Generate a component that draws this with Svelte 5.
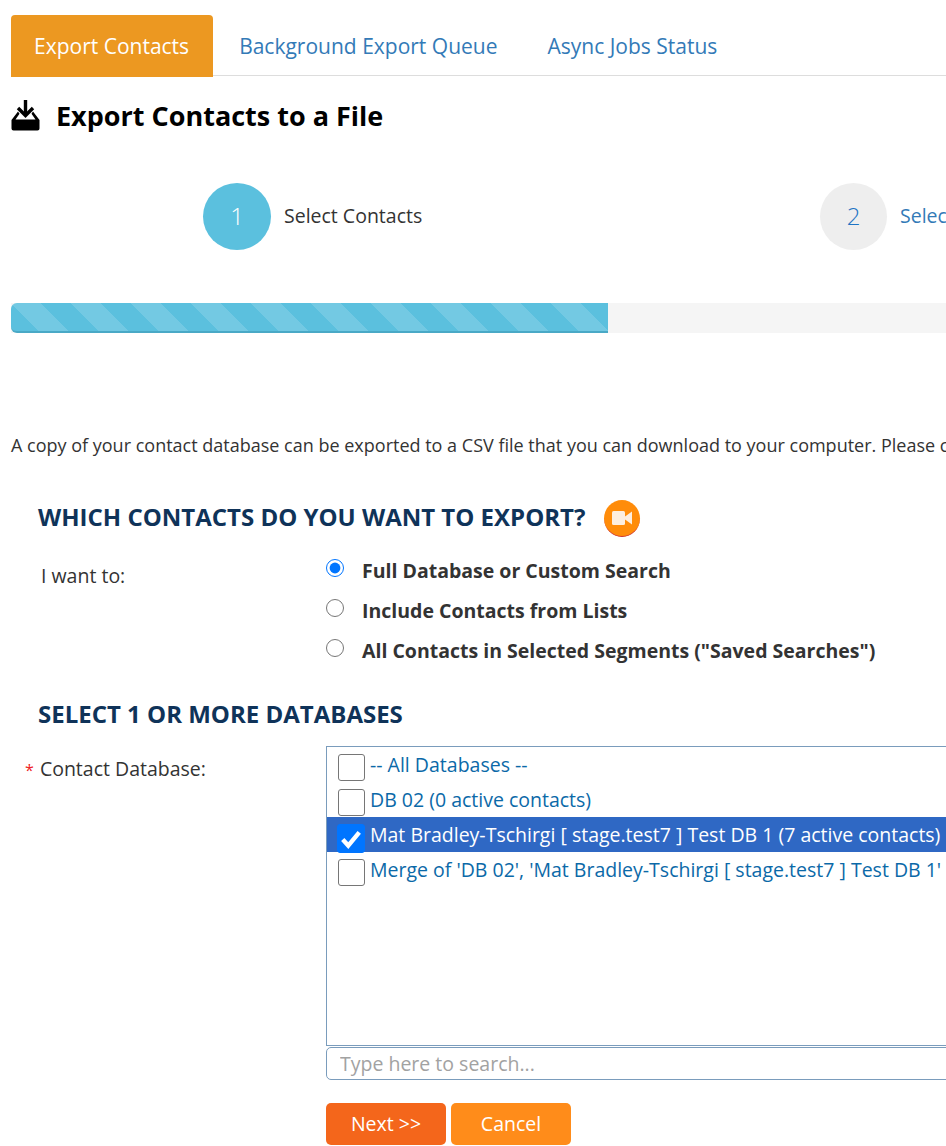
<script>
  const tabs = ['Export Contacts', 'Background Export Queue', 'Async Jobs Status'];
  const modes = [
    'Full Database or Custom Search',
    'Include Contacts from Lists',
    'All Contacts in Selected Segments ("Saved Searches")',
  ];
  const databases = [
    { label: '-- All Databases --', checked: false },
    { label: 'DB 02 (0 active contacts)', checked: false },
    { label: 'Mat Bradley-Tschirgi [ stage.test7 ] Test DB 1 (7 active contacts)', checked: true },
    { label: "Merge of 'DB 02', 'Mat Bradley-Tschirgi [ stage.test7 ] Test DB 1' (7 active contacts)", checked: false },
  ];
</script>

<div class="page">
  <nav class="tabs">
    {#each tabs as tab, i}
      <a class="tab" class:active={i === 0} href="#top">{tab}</a>
    {/each}
  </nav>

  <h1 class="title">
    <svg class="title-icon" width="29" height="31" viewBox="0 0 29 31">
      <path d="M14.5 0v14" stroke="#000" stroke-width="3.4" fill="none"/>
      <path d="M7 8l7.5 7.5L22 8" stroke="#000" stroke-width="3.4" fill="none"/>
      <path d="M7 11.5L.5 20v8.5a2 2 0 0 0 2 2h24a2 2 0 0 0 2-2V20L22 11.5l-1.5 2.2 4 5.8H4.500l4-5.800z" fill="#000"/>
    </svg>
    Export Contacts to a File
  </h1>

  <div class="steps">
    <div class="step current"><span class="circle">1</span><span class="step-label">Select Contacts</span></div>
    <div class="step"><span class="circle">2</span><span class="step-label">Select Fields</span></div>
  </div>

  <div class="progress"><div class="progress-bar"></div></div>

  <p class="intro">A copy of your contact database can be exported to a CSV file that you can download to your computer. Please choose the contacts to export below.</p>

  <h2 class="heading first">
    WHICH CONTACTS DO YOU WANT TO EXPORT?
    <span class="video">
      <svg width="20" height="14" viewBox="0 0 20 14"><rect x="0" y="0" width="13" height="14" rx="1.500" fill="#fdeee0"/><path d="M13 5.500L20 .5v13L13 8.500z" fill="#fdeee0"/></svg>
    </span>
  </h2>

  <div class="want">
    <span class="want-label">I want to:</span>
    <div class="radios">
      {#each modes as mode, i}
        <label class="radio"><input type="radio" name="mode" checked={i === 0} /><span>{mode}</span></label>
      {/each}
    </div>
  </div>

  <h2 class="heading second">SELECT 1 OR MORE DATABASES</h2>

  <div class="db">
    <span class="db-label"><i>*</i> Contact Database:</span>
    <div class="db-field">
      <div class="db-list">
        {#each databases as db}
          <div class="db-row" class:selected={db.checked}>
            <span class="check">
              {#if db.checked}
                <svg width="22" height="20" viewBox="0 0 20 18"><path d="M2.500 9.500l5 5.500L17.500 3" stroke="#fff" stroke-width="4" fill="none"/></svg>
              {/if}
            </span>
            <span class="db-text">{db.label}</span>
          </div>
        {/each}
      </div>
      <input class="search" type="text" placeholder="Type here to search..." />
      <div class="actions">
        <button class="btn next">Next &gt;&gt;</button>
        <button class="btn cancel">Cancel</button>
      </div>
    </div>
  </div>
</div>

<style>
  :global(body) {
    margin: 0;
    background: #fff;
    overflow: hidden;
  }

  .page {
    width: 946px;
    height: 1146px;
    overflow: hidden;
    box-sizing: border-box;
    padding: 15px 0 0 11px;
    font-family: "Open Sans", "Liberation Sans", sans-serif;
    font-size: 16px;
    color: #333;
  }

  .tabs {
    display: flex;
    height: 60px;
    border-bottom: 1px solid #ddd;
  }

  .tab {
    height: 62px;
    line-height: 62px;
    padding: 0 23px;
    margin-right: 4px;
    font-size: 21px;
    color: #337ab7;
    text-decoration: none;
    white-space: nowrap;
    border-radius: 4px 4px 0 0;
  }

  .tab.active {
    padding-right: 24px;
    margin-right: 3px;
    background: #ec9821;
    color: #fff;
  }

  .title {
    display: flex;
    align-items: center;
    gap: 16px;
    margin: 21px 0 0;
    height: 36px;
    font-size: 27px;
    font-weight: 700;
    color: #000;
  }

  .title-icon {
    flex: none;
  }

  .steps {
    display: flex;
    margin: 50px 0 0 192px;
    height: 67px;
  }

  .step {
    display: flex;
    align-items: center;
    gap: 13px;
    width: 617px;
    flex: none;
    font-size: 19.500px;
    color: #337ab7;
    white-space: nowrap;
  }

  .step.current {
    color: #333;
  }

  .step-label {
    padding-bottom: 2px;
  }

  .circle {
    width: 67px;
    height: 67px;
    border-radius: 50%;
    flex: none;
    display: flex;
    align-items: center;
    justify-content: center;
    padding-bottom: 2px;
    box-sizing: border-box;
    font-size: 24px;
    font-weight: 300;
    background: #eee;
    color: #1f74c4;
  }

  .current .circle {
    width: 68px;
    background: #5bc0de;
    color: #fff;
  }

  .progress {
    margin-top: 53px;
    height: 30px;
    background: #f5f5f5;
    overflow: hidden;
  }

  .progress-bar {
    width: 597px;
    height: 30px;
    box-sizing: border-box;
    border-radius: 6px 0 0 6px;
    border-bottom: 2px solid #4aa9c6;
    background-color: #5bc0de;
    background-image: linear-gradient(
      45deg,
      rgba(255, 255, 255, 0.15) 25%,
      transparent 25%,
      transparent 50%,
      rgba(255, 255, 255, 0.15) 50%,
      rgba(255, 255, 255, 0.15) 75%,
      transparent 75%
    );
    background-size: 60px 60px;
  }

  .intro {
    margin: 101px 0 0;
    line-height: 22px;
    font-size: 18px;
    white-space: nowrap;
  }

  .heading {
    display: flex;
    align-items: center;
    margin: 0 0 0 27px;
    font-size: 24px;
    font-weight: 700;
    color: #0f3359;
    white-space: nowrap;
  }

  .heading.first {
    margin-top: 41px;
    height: 38px;
  }

  .heading.second {
    margin-top: 32px;
    height: 32px;
  }

  .video {
    width: 36px;
    height: 37px;
    margin: 5px 0 0 19px;
    border-radius: 50%;
    background: #ff8c0a;
    border-bottom: 1px solid #c33;
    box-sizing: border-box;
    display: flex;
    align-items: center;
    justify-content: center;
  }

  .want {
    display: flex;
    margin-top: 22px;
  }

  .want-label {
    width: 285px;
    margin: 0 0 0 30px;
    padding-top: 5px;
    font-size: 19.500px;
    flex: none;
  }

  .radios {
    display: flex;
    flex-direction: column;
    gap: 12px;
  }

  .radio {
    display: flex;
    gap: 18px;
    height: 28px;
    line-height: 28px;
    font-size: 19.500px;
    font-weight: 700;
    white-space: nowrap;
  }

  .radio input {
    width: 18px;
    height: 18px;
    margin: 2px 0 0;
    accent-color: #0075ff;
  }

  .db {
    display: flex;
    margin-top: 17px;
  }

  .db-label {
    width: 301px;
    margin-left: 14px;
    padding-top: 9px;
    font-size: 19.500px;
    flex: none;
    box-sizing: border-box;
  }

  .db-label i {
    margin-right: 1px;
    color: #e22;
    font-size: 16px;
    font-style: normal;
  }

  .db-field {
    width: 640px;
    flex: none;
  }

  .db-list {
    height: 300px;
    box-sizing: border-box;
    border: 1px solid #7a9cbc;
    overflow: hidden;
  }

  .db-row {
    display: flex;
    height: 35px;
    line-height: 35px;
    padding-left: 11px;
    gap: 5px;
    font-size: 19.500px;
    color: #0b69a8;
    white-space: nowrap;
  }

  .db-row.selected {
    background: #2f68c4;
    color: #fff;
  }

  .check {
    width: 27px;
    height: 27px;
    margin-top: 7px;
    flex: none;
    box-sizing: border-box;
    border: 1.500px solid #767676;
    border-radius: 3px;
    background: #fff;
    display: flex;
    align-items: center;
    justify-content: center;
  }

  .selected .check {
    width: 28px;
    height: 29px;
    margin-left: -1px;
    background: #0075ff;
    border-color: #0075ff;
  }

  .search {
    display: block;
    width: 100%;
    height: 33px;
    margin-top: 1px;
    box-sizing: border-box;
    padding: 0 13px;
    border: 1px solid #7a9cbc;
    border-radius: 5px;
    font: 19.500px "Open Sans", "Liberation Sans", sans-serif;
    outline: none;
  }

  .search::placeholder {
    color: #a2a2a2;
  }

  .actions {
    display: flex;
    gap: 5px;
    margin-top: 23px;
  }

  .btn {
    width: 120px;
    height: 42px;
    padding: 0 0 2px;
    border: none;
    border-radius: 5px;
    color: #fff;
    font: 19.500px "Open Sans", "Liberation Sans", sans-serif;
  }

  .next {
    background: #f4661b;
  }

  .cancel {
    background: #ff8c1a;
  }
</style>
